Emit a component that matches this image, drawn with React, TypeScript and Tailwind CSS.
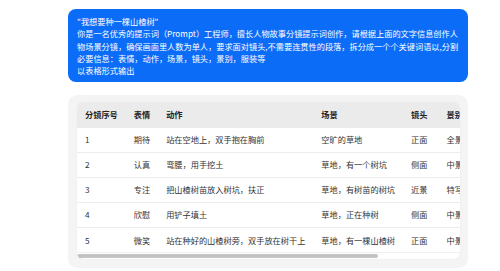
const rows = [
  { id: "1", face: "期待", action: "站在空地上，双手抱在胸前", scene: "空旷的草地", shot: "正面", size: "全景" },
  { id: "2", face: "认真", action: "弯腰，用手挖土", scene: "草地，有一个树坑", shot: "侧面", size: "中景" },
  { id: "3", face: "专注", action: "把山楂树苗放入树坑，扶正", scene: "草地，有树苗的树坑", shot: "近景", size: "特写" },
  { id: "4", face: "欣慰", action: "用铲子填土", scene: "草地，正在种树", shot: "侧面", size: "中景" },
  { id: "5", face: "微笑", action: "站在种好的山楂树旁，双手放在树干上", scene: "草地，有一棵山楂树", shot: "正面", size: "中景" },
];

const headers = ["分镜序号", "表情", "动作", "场景", "镜头", "景别"];

export default function App() {
  return (
    <div className="w-[500px] h-[271px] overflow-hidden bg-white pt-[9px] pl-[68px] font-['Noto_Sans_CJK_SC','Noto_Sans',sans-serif]">
      <div className="w-[400px] rounded-lg bg-[#0b6cf8] px-[9px] py-[6px] text-[8.2px] leading-[12.25px] text-white">
        <p>"我想要种一棵山楂树"</p>
        <p>
          你是一名优秀的提示词（Prompt）工程师，擅长人物故事分镜提示词创作，请根据上面的文字信息创作人物场景分镜，确保画面里人数为单人，要求面对镜头,不需要连贯性的段落，拆分成一个个关键词语以,分割
        </p>
        <p>必要信息：表情，动作，场景，镜头，景别，服装等</p>
        <p>以表格形式输出</p>
      </div>

      <div className="mt-[13px] w-[400px] rounded-[9px] bg-[#f4f4f4] pt-[7px] pb-[9px] pl-[9px] pr-[8px]">
        <div className="overflow-hidden rounded-md bg-white shadow-[0_0_1px_rgba(0,0,0,0.12)]">
          <div className="overflow-hidden">
            <table className="w-max border-collapse text-left text-[8.2px] leading-[11px] text-[#333]">
              <thead>
                <tr className="bg-[#ebebeb]">
                  {headers.map((h, i) => (
                    <th
                      key={h}
                      className={
                        i === 4
                          ? "h-[25px] whitespace-nowrap pl-2 pr-[11px] font-semibold text-[#222]"
                          : "h-[25px] whitespace-nowrap px-2 font-semibold text-[#222]"
                      }
                    >
                      {h}
                    </th>
                  ))}
                </tr>
              </thead>
              <tbody>
                {rows.map((r) => (
                  <tr key={r.id} className="border-t border-[#ececec]">
                    <td className="h-[25px] whitespace-nowrap px-2">{r.id}</td>
                    <td className="whitespace-nowrap px-2">{r.face}</td>
                    <td className="whitespace-nowrap px-2">{r.action}</td>
                    <td className="whitespace-nowrap px-2">{r.scene}</td>
                    <td className="whitespace-nowrap pl-2 pr-[11px]">{r.shot}</td>
                    <td className="whitespace-nowrap pl-2 pr-[30px]">{r.size}</td>
                  </tr>
                ))}
              </tbody>
            </table>
          </div>
          <div className="flex h-[7px] items-center border-t border-[#f0f0f0]">
            <div className="h-[4px] w-[301px] rounded-full bg-[#c4c4c4]" />
          </div>
        </div>
      </div>
    </div>
  );
}
